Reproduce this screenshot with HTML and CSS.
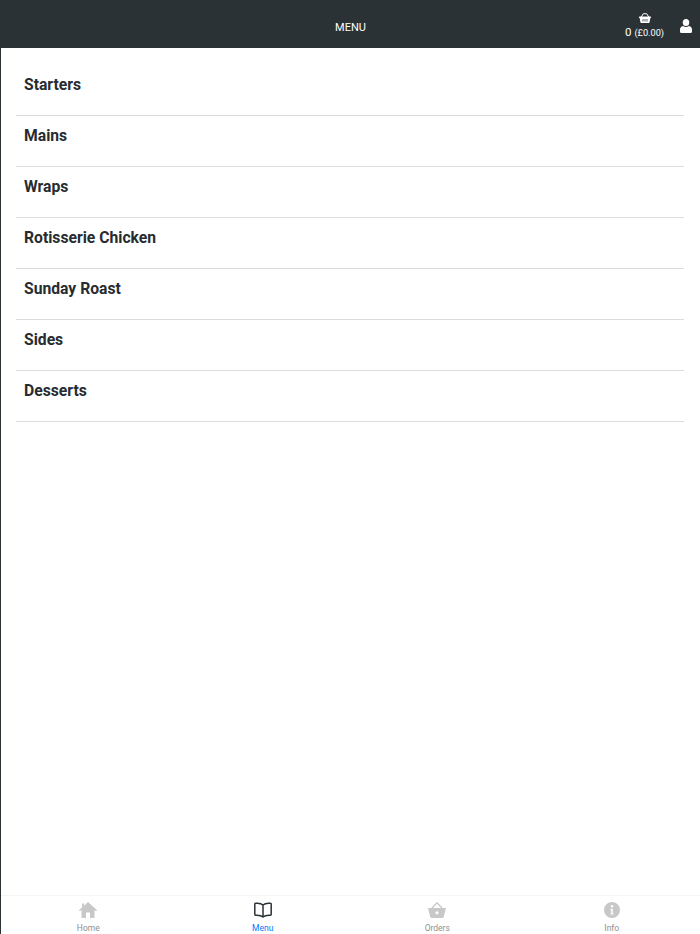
FILE: index.html
```html
<!DOCTYPE html>
<html lang="en">
<head>
    <meta charset="UTF-8">
    <meta name="viewport" content="width=device-width, initial-scale=1.0">
    <title>Menu</title>
    <link rel="stylesheet" href="styles.css">
</head>
<body>
    <div class="page">
        <header class="topbar">
            <span class="topbar-title">MENU</span>
            <div class="topbar-right">
                <div class="basket">
                    <svg class="basket-icon" viewBox="0 0 24 20" width="12" height="10">
                        <path fill="#fff" d="M1 7h22a1 1 0 0 1 1 1v1a1 1 0 0 1-1 1h-.4l-1.300 8.200A2 2 0 0 1 19.300 20H4.700a2 2 0 0 1-2-1.800L1.400 10H1a1 1 0 0 1-1-1V8a1 1 0 0 1 1-1z"/>
                        <path fill="none" stroke="#fff" stroke-width="2" d="M4.500 8 8.500 1.500h7l4 6.500"/>
                        <path stroke="#2b3236" stroke-width="1.500" d="M8 12v5M12 12v5M16 12v5"/>
                    </svg>
                    <div class="basket-total">0 <small>(£0.00)</small></div>
                </div>
                <svg class="user-icon" viewBox="0 0 14 15" width="12" height="14" preserveAspectRatio="none">
                    <circle cx="7" cy="3.800" r="3.800" fill="#fff"/>
                    <path fill="#fff" d="M3.600 7.500C4.500 8.200 5.700 8.600 7 8.600s2.500-.4 3.400-1.100C12.800 7.700 14 9.400 14 11.500v1.800c0 .9-.7 1.700-1.600 1.700H1.600C.7 15 0 14.200 0 13.300v-1.800c0-2.100 1.200-3.800 3.600-4z"/>
                </svg>
            </div>
        </header>

        <ul class="menu-list">
            <li>Starters</li>
            <li>Mains</li>
            <li>Wraps</li>
            <li>Rotisserie Chicken</li>
            <li>Sunday Roast</li>
            <li>Sides</li>
            <li>Desserts</li>
        </ul>

        <nav class="tabbar">
            <a class="tab">
                <svg viewBox="0 0 18 16" width="18" height="16">
                    <path fill="#c8c8c8" d="M9 0 18 8.300 17 9.300 15.500 8V16H11V10.500H7V16H2.500V8L1 9.300 0 8.300 3 5.500V1.500H5V3.700z"/>
                </svg>
                <span>Home</span>
            </a>
            <a class="tab tab-active">
                <svg viewBox="0 0 18 16" width="18" height="16">
                    <path fill="none" stroke="#2b3236" stroke-width="1.500" stroke-linejoin="round" d="M9 3C7.500 1.500 4.500 1 1.500 1.300c-.4 0-.7.300-.7.700v10.500c0 .4.300.7.700.7 3-.2 6 .3 7.500 1.800 1.500-1.500 4.500-2 7.500-1.800.4 0 .7-.3.700-.7V2c0-.4-.3-.7-.7-.7C13.500 1 10.500 1.500 9 3zM9 3v11.500"/>
                </svg>
                <span>Menu</span>
            </a>
            <a class="tab">
                <svg viewBox="0 0 18 16" width="18" height="16">
                    <path fill="#c8c8c8" fill-rule="evenodd" d="M0 6h18l-2.200 8.800c-.2.700-.8 1.200-1.500 1.200H3.700c-.7 0-1.300-.5-1.500-1.200zM9 9.200a1.600 1.600 0 1 0 0 3.200 1.600 1.600 0 0 0 0-3.200z"/>
                    <path fill="none" stroke="#c8c8c8" stroke-width="1.300" d="M4 6 9 .8 14 6"/>
                </svg>
                <span>Orders</span>
            </a>
            <a class="tab">
                <svg viewBox="0 0 18 18" width="18" height="18">
                    <path fill="#c8c8c8" fill-rule="evenodd" d="M9 0a9 9 0 1 1 0 18A9 9 0 0 1 9 0zM9 3.300a1.500 1.500 0 1 0 0 3 1.500 1.500 0 0 0 0-3zM7.300 7.700v1.200h.8v3.900h-.8V14h3.400v-1.200h-.8V7.700z"/>
                </svg>
                <span>Info</span>
            </a>
        </nav>
    </div>
</body>
</html>
```

FILE: styles.css
```css
*{
    margin: 0;
    padding: 0;
    box-sizing: border-box;
}
body{
    font-family: Roboto, "Liberation Sans", sans-serif;
    color: #272c30;
    background: #fff;
}
li{
    list-style: none;
}
.page{
    height: 934px;
    display: flex;
    flex-direction: column;
    border-left: 1px solid #2b3236;
    overflow: hidden;
}

.topbar{
    height: 48px;
    flex-shrink: 0;
    background-color: #2b3236;
    color: #fff;
    display: flex;
    align-items: center;
    justify-content: center;
    padding-top: 6px;
    position: relative;
}
.topbar-title{
    font-size: 11px;
}
.topbar-right{
    position: absolute;
    right: 8px;
    top: 0;
    height: 48px;
    padding-top: 4px;
    display: flex;
    align-items: center;
    gap: 16px;
}
.basket{
    display: flex;
    flex-direction: column;
    align-items: center;
    gap: 3px;
}
.basket-total{
    font-size: 11.5px;
    line-height: 13px;
}
.basket-total small{
    font-size: 9.2px;
}
.basket-icon,.user-icon{
    display: block;
}

.menu-list{
    flex: 1;
    padding: 17px 16px 0 15px;
}
.menu-list li{
    height: 51px;
    padding: 10px 8px 0;
    border-bottom: 1px solid #dcdcdc;
    font-size: 15.7px;
    font-weight: 700;
    line-height: 20px;
}

.tabbar{
    height: 39px;
    flex-shrink: 0;
    border-top: 1px solid #f4f4f4;
    padding-right: 1px;
    display: flex;
}
.tab{
    flex: 1;
    display: flex;
    flex-direction: column;
    align-items: center;
    padding-top: 6px;
    font-size: 8.5px;
    line-height: 11px;
    color: #8f8f8f;
}
.tab svg{
    display: block;
    height: 16px;
    margin-bottom: 5px;
}
.tab-active{
    color: #007bff;
}
```
